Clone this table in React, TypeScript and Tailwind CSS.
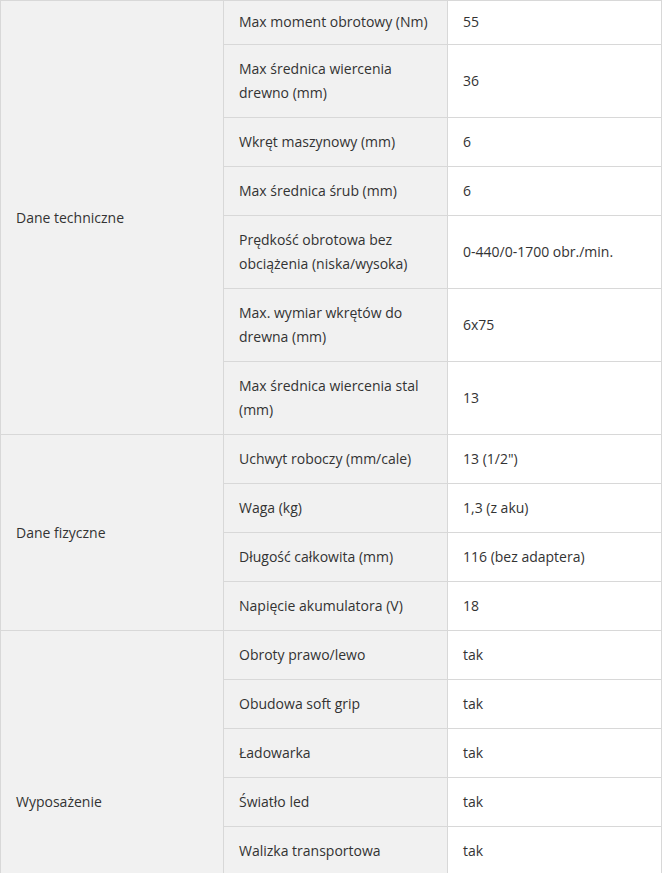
import React from "react";

type Row = { label: string; value: string };
type Group = { name: string; rows: Row[] };

const groups: Group[] = [
  {
    name: "Dane techniczne",
    rows: [
      { label: "Max moment obrotowy (Nm)", value: "55" },
      { label: "Max średnica wiercenia drewno (mm)", value: "36" },
      { label: "Wkręt maszynowy (mm)", value: "6" },
      { label: "Max średnica śrub (mm)", value: "6" },
      { label: "Prędkość obrotowa bez obciążenia (niska/wysoka)", value: "0-440/0-1700 obr./min." },
      { label: "Max. wymiar wkrętów do drewna (mm)", value: "6x75" },
      { label: "Max średnica wiercenia stal (mm)", value: "13" },
    ],
  },
  {
    name: "Dane fizyczne",
    rows: [
      { label: "Uchwyt roboczy (mm/cale)", value: "13 (1/2\")" },
      { label: "Waga (kg)", value: "1,3 (z aku)" },
      { label: "Długość całkowita (mm)", value: "116 (bez adaptera)" },
      { label: "Napięcie akumulatora (V)", value: "18" },
    ],
  },
  {
    name: "Wyposażenie",
    rows: [
      { label: "Obroty prawo/lewo", value: "tak" },
      { label: "Obudowa soft grip", value: "tak" },
      { label: "Ładowarka", value: "tak" },
      { label: "Światło led", value: "tak" },
      { label: "Walizka transportowa", value: "tak" },
      { label: "", value: "" },
      { label: "", value: "" },
    ],
  },
];

const spanClass: Record<number, string> = {
  4: "row-span-4",
  5: "row-span-5",
  7: "row-span-7",
};

export default function App() {
  let first = true;
  return (
    <div
      className="w-[662px] h-[873px] overflow-hidden bg-white text-[14px] leading-6 text-[#333333]"
      style={{ fontFamily: '"Open Sans", "Noto Sans", Arial, sans-serif' }}
    >
      <div className="grid grid-cols-[223px_224px_214px] border-t border-l border-[#d8d8d8]">
        {groups.map((g) => (
          <React.Fragment key={g.name}>
            <div
              className={`${spanClass[g.rows.length]} col-start-1 bg-[#f1f1f1] border-r border-b border-[#d8d8d8] px-[15px] flex items-center`}
            >
              {g.name}
            </div>
            {g.rows.map((r, i) => {
              const py = first ? "pt-[9px] pb-2.5" : "py-3";
              first = false;
              const empty = r.label === "" ? "h-[49px]" : "";
              return (
                <React.Fragment key={g.name + i}>
                  <div className={`col-start-2 ${empty} bg-[#f1f1f1] border-r border-b border-[#d8d8d8] px-[15px] ${py}`}>
                    {r.label}
                  </div>
                  <div className={`col-start-3 ${empty} bg-white border-r border-b border-[#d8d8d8] px-[15px] ${py} flex items-center`}>
                    {r.value}
                  </div>
                </React.Fragment>
              );
            })}
          </React.Fragment>
        ))}
      </div>
    </div>
  );
}
